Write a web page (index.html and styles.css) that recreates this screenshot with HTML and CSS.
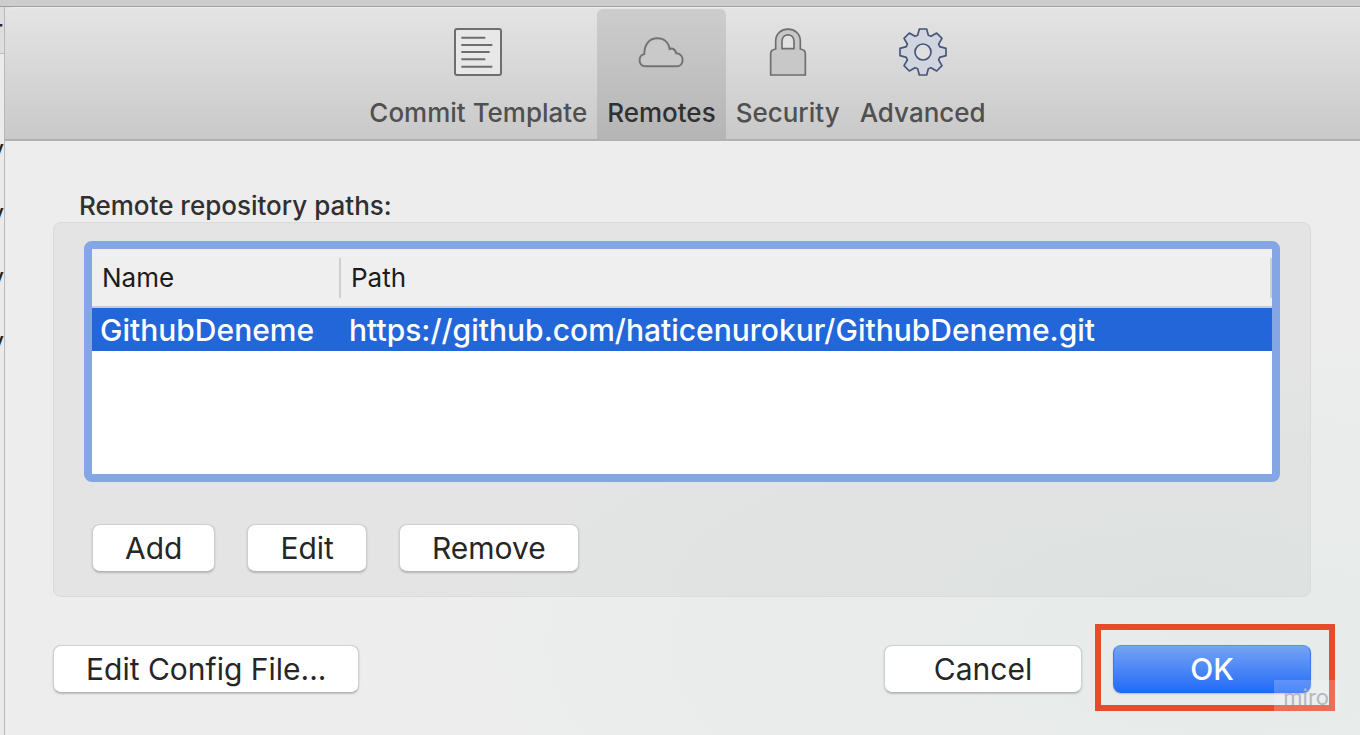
FILE: index.html
```
<!DOCTYPE html>
<html lang="en">

<head>
	<meta charset="utf-8">
	<title>Repository Settings</title>
	<link rel="stylesheet" href="styles.css">
</head>

<body>
	<div class="titlebar"></div>
	<div class="main">
		<div class="behind">
			<div class="behind-head">-</div>
			<div class="behind-row">y</div>
			<div class="behind-row">y</div>
			<div class="behind-row">y</div>
			<div class="behind-row">y</div>
		</div>
		<div class="dialog">
			<nav class="toolbar">
				<button class="tab" type="button">
					<svg class="icon" viewBox="0 0 144 144" fill="none" stroke="#6e6e6e" stroke-width="6">
						<rect x="3" y="3" width="138" height="138" rx="6" fill="#e8e8e8" />
						<path d="M22 29H94M22 51H115M22 72H107M22 94H94M22 116H115" />
					</svg>
					Commit Template
				</button>
				<button class="tab selected" type="button">
					<svg class="icon" viewBox="0 0 144 144" fill="#c9c9c9" stroke="#737373" stroke-width="6">
						<path d="M25 115C3 115 2 82 22 78C22 48 38 31 61 31C81 31 95 43 98 63C107 59 114 64 118 76C144 78 142 115 119 115Z" />
					</svg>
					Remotes
				</button>
				<button class="tab" type="button">
					<svg class="icon" viewBox="0 0 144 144" stroke="#6e6e6e" stroke-width="5">
						<path fill="#c8c8c8" d="M20 141V76Q20 66 35 63V40C35 -9 109 -9 109 40V63Q124 66 124 76V141Z" />
						<path fill="#e2e2e2" d="M54 62V40C54 14 90 14 90 40V62Z" />
					</svg>
					Security
				</button>
				<button class="tab" type="button">
					<svg class="icon" viewBox="-72 -72 144 144" fill="#d0d5df" stroke="#46557a" stroke-width="5" stroke-linejoin="round">
						<path d="M-11 -69H11L16 -50L24 -47L41 -57L57 -41L47 -24L50 -16L69 -11V11L50 16L47 24L57 41L41 57L24 47L16 50L11 69H-11L-16 50L-24 47L-41 57L-57 41L-47 24L-50 16L-69 11V-11L-50 -16L-47 -24L-57 -41L-41 -57L-24 -47L-16 -50Z" />
						<circle r="24" fill="#dfdfdf" />
					</svg>
					Advanced
				</button>
			</nav>
			<div class="content">
				<h1 class="label" id="paths-label">Remote repository paths:</h1>
				<div class="panel">
					<div class="list">
						<table class="remotes" aria-labelledby="paths-label">
							<thead>
								<tr>
									<th class="col-name">Name</th>
									<th>Path</th>
								</tr>
							</thead>
							<tbody>
								<tr>
									<td>GithubDeneme</td>
									<td>https://github.com/haticenurokur/GithubDeneme.git</td>
								</tr>
							</tbody>
						</table>
					</div>
					<div class="actions">
						<button class="btn" type="button">Add</button>
						<button class="btn" type="button">Edit</button>
						<button class="btn" type="button">Remove</button>
					</div>
				</div>
				<div class="footer">
					<button class="btn" type="button">Edit Config File...</button>
					<div class="confirm">
						<button class="btn wide" type="button">Cancel</button>
						<div class="ok">
							<button class="btn wide primary" type="button">OK</button>
							<div class="marker"></div>
							<div class="watermark">miro</div>
						</div>
					</div>
				</div>
			</div>
		</div>
	</div>
</body>

</html>
```
FILE: styles.css
```
* {
	box-sizing: border-box;
}

body {
	margin: 0;
	min-height: 100vh;
	display: flex;
	flex-direction: column;
	background: #ececec;
	color: #262626;
	font-family: Inter, "Liberation Sans", sans-serif;
	font-size: 26px;
}

button {
	font: inherit;
	color: inherit;
}

.titlebar {
	height: 7px;
	background: #cdcdcd;
	border-bottom: 1px solid #a0a0a0;
}

.main {
	flex: 1;
	display: flex;
}

/* Sliver of the window behind the dialog */
.behind {
	width: 5px;
	display: flex;
	flex-direction: column;
	align-items: flex-end;
	overflow: hidden;
	border-right: 1px solid #b9b9b9;
	background: #ebebeb;
}

.behind-head {
	height: 47px;
	margin-bottom: 64px;
	line-height: 34px;
	border-bottom: 1px solid #bbb;
	background: #dedede;
	font-weight: 500;
}

.behind-row {
	line-height: 64px;
}

.dialog {
	flex: 1;
	display: flex;
	flex-direction: column;
	min-width: 0;
	background: #e3e3e3;
}

/* Toolbar */
.toolbar {
	display: flex;
	justify-content: center;
	height: 134px;
	padding: 1px 10px 0 0;
	border-top: 1px solid #ededed;
	border-bottom: 2px solid #b0b0b0;
	border-radius: 10px 0 0 0;
	background: linear-gradient(#e4e4e4, #c9c9c9);
}

.tab {
	display: flex;
	flex-direction: column;
	align-items: center;
	gap: 20px;
	padding: 19px 10px 0;
	border: 0;
	background: none;
	color: #505050;
	font-weight: 500;
	line-height: 34px;
	white-space: nowrap;
}

.tab.selected {
	border-radius: 6px 6px 0 0;
	background: linear-gradient(#cdcdcd, #b5b5b5);
	color: #303030;
}

.icon {
	width: 48px;
	height: 48px;
}

/* Content */
.content {
	flex: 1;
	padding: 49px 49px 42px 48px;
	background: radial-gradient(ellipse at 90% 85%, #e6ebe9, #ededed 50%);
}

.label {
	margin: 0 26px;
	color: #303030;
	font-size: 26px;
	font-weight: 500;
	line-height: 32px;
}

.panel {
	padding: 18px 30px 24px;
	border: 1px solid #dadada;
	border-radius: 8px;
	background: radial-gradient(ellipse at 90% 100%, #dde2e0, #e4e4e4 50%);
}

.list {
	height: 241px;
	border: 8px solid #85a6e4;
	border-radius: 8px;
	background: #fff;
}

.remotes {
	width: 100%;
	border-collapse: collapse;
	table-layout: fixed;
	text-align: left;
}

.remotes th {
	height: 58px;
	padding: 0 10px;
	border-bottom: 2px solid #c9ccd2;
	/* column divider, shorter than the header */
	background: linear-gradient(#cfcfcf, #cfcfcf) right center / 2px 40px no-repeat #efefef;
	color: #1c1c1c;
	font-weight: 400;
}

.remotes .col-name {
	width: 249px;
}

.remotes td {
	height: 44px;
	padding: 0 8px;
	background: #2266d9;
	color: #fff;
	font-size: 30px;
	font-weight: 500;
	line-height: 36px;
	white-space: nowrap;
}

.actions {
	display: flex;
	gap: 32px;
	margin: 42px 8px 0;
}

/* Buttons */
.btn {
	height: 48px;
	padding: 0 32px;
	border: 1px solid #cfcfcf;
	border-bottom-color: #b4b4b4;
	border-radius: 8px;
	background: #fff;
	box-shadow: 0 1px 2px rgba(0, 0, 0, .2);
	font-size: 30px;
	line-height: 36px;
	white-space: nowrap;
}

.btn.wide {
	width: 198px;
}

.btn.primary {
	border-color: #5f92e8 #3d78ee #2465ee;
	background: linear-gradient(#75a4f4, #226af8);
	color: #fff;
	font-weight: 500;
}

.footer {
	display: flex;
	justify-content: space-between;
	margin-top: 48px;
}

.confirm {
	display: flex;
	gap: 31px;
}

.ok {
	position: relative;
}

/* Annotation drawn round the OK button */
.marker {
	position: absolute;
	inset: -21px -24px -18px -18px;
	border: 6px solid #e84a2c;
	pointer-events: none;
}

.watermark {
	position: absolute;
	right: -27px;
	bottom: -18px;
	padding: 3px 9px 0;
	background: rgba(255, 255, 255, .2);
	color: #b4b8c4;
	font-size: 22px;
	line-height: 28px;
	pointer-events: none;
}
```
